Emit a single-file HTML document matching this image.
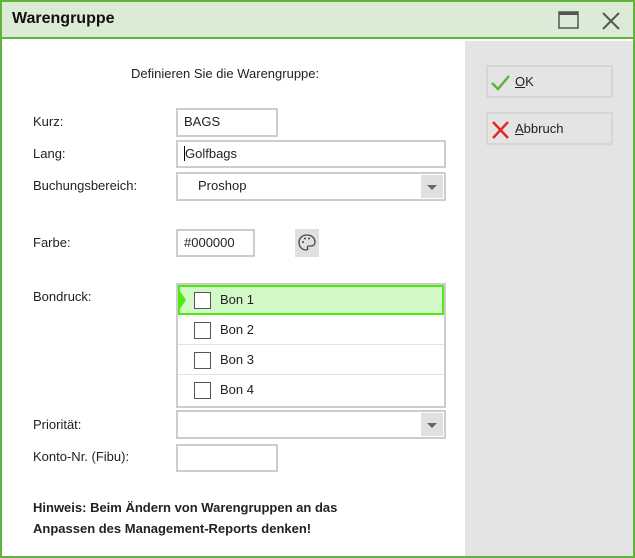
<!DOCTYPE html>
<html><head><style>
*{box-sizing:border-box;margin:0;padding:0}
body{width:635px;height:558px;overflow:hidden;background:#fff;font-family:"Liberation Sans","DejaVu Sans",sans-serif;font-size:13px;color:#222;position:relative}
.frame{position:absolute;left:0;top:0;width:635px;height:558px;border:2px solid #5fb43e}
.title{position:absolute;left:2px;top:2px;width:631px;height:37px;background:#dcebd5;border-bottom:2px solid #5fb43e}
.title span{position:absolute;left:10px;top:8px;font-weight:bold;font-size:16px;color:#111}
.right{position:absolute;left:465px;top:41px;width:168px;height:515px;background:#e4e4e4}
.a{position:absolute}
.lbl{position:absolute;left:33px;font-size:13px;color:#222}
.in{position:absolute;background:#fff;border:2px solid #cdcdcd;font-size:13px;padding:4px 0 0 6px}
.dd{position:absolute;right:1px;top:1px;width:22px;bottom:1px;background:#e0e0e0}
.dd:after{content:"";position:absolute;left:6px;top:10px;border:5px solid transparent;border-top:5px solid #666}
.btn{position:absolute;left:486px;width:127px;height:33px;border:2px solid #d6d6d6;background:#e4e4e4;font-size:13px}
.row{position:absolute;left:2px;width:266px;height:30px;border-bottom:1px solid #e2e2e2}
.cb{position:absolute;left:16px;top:7px;width:17px;height:17px;border:1px solid #555;background:#fff}
.row span{position:absolute;left:42px;top:7px}
</style></head><body>
<div class="frame"></div>
<div class="title"><span>Warengruppe</span>
<svg class="a" style="left:556px;top:9px" width="22" height="20"><rect x="1" y="1" width="19" height="16" fill="none" stroke="#555" stroke-width="1.5"/><rect x="1" y="1" width="19" height="3" fill="#555"/></svg>
<svg class="a" style="left:598px;top:8px" width="22" height="22"><path d="M3 3L19 19M19 3L3 19" stroke="#555" stroke-width="2"/></svg>
</div>
<div class="right"></div>
<div class="a" style="left:131px;top:66px">Definieren Sie die Warengruppe:</div>
<div class="lbl" style="top:114px">Kurz:</div>
<div class="lbl" style="top:146px">Lang:</div>
<div class="lbl" style="top:178px">Buchungsbereich:</div>
<div class="lbl" style="top:235px">Farbe:</div>
<div class="lbl" style="top:289px">Bondruck:</div>
<div class="lbl" style="top:417px">Priorität:</div>
<div class="lbl" style="top:449px">Konto-Nr. (Fibu):</div>
<div class="in" style="left:176px;top:108px;width:102px;height:29px">BAGS</div>
<div class="in" style="left:176px;top:140px;width:270px;height:28px"><span style="border-left:1px solid #000">Golfbags</span></div>
<div class="in" style="left:176px;top:172px;width:270px;height:29px;padding-left:20px">Proshop<div class="dd"></div></div>
<div class="in" style="left:176px;top:229px;width:79px;height:28px">#000000</div>
<div class="a" style="left:295px;top:229px;width:24px;height:28px;background:#e0e0e0">
<svg width="24" height="28"><path d="M12 6C7 6 4 9.5 4 13.5S7 21 11 21c1.5 0 2-1 1.5-2s0-2 1.5-2h2c2.5 0 4-1.5 4-4C20 9 16.5 6 12 6z" fill="none" stroke="#444" stroke-width="1.3"/><circle cx="8" cy="13" r="1" fill="#444"/><circle cx="10" cy="9.5" r="1" fill="#444"/><circle cx="14" cy="9.5" r="1" fill="#444"/></svg></div>
<div class="a" style="left:176px;top:283px;width:270px;height:125px;border:2px solid #cdcdcd;background:#fff">
<div class="row" style="top:0;left:0;width:266px;background:#d3fac6;border:2px solid #4fea10"><div style="position:absolute;left:-2px;top:1px;width:0;height:0;border-top:12px solid transparent;border-bottom:12px solid transparent;border-left:8px solid #4fea10"></div><div class="cb" style="top:5px;left:14px"></div><span style="top:5px;left:40px">Bon 1</span></div>
<div class="row" style="top:30px;left:0"><div class="cb"></div><span>Bon 2</span></div>
<div class="row" style="top:60px;left:0"><div class="cb"></div><span>Bon 3</span></div>
<div class="row" style="top:90px;left:0;border:none"><div class="cb"></div><span>Bon 4</span></div>
</div>
<div class="in" style="left:176px;top:410px;width:270px;height:29px"><div class="dd"></div></div>
<div class="in" style="left:176px;top:444px;width:102px;height:28px"></div>
<div class="a" style="left:33px;top:497px;font-weight:bold;line-height:21px">Hinweis: Beim Ändern von Warengruppen an das<br>Anpassen des Management-Reports denken!</div>
<div class="btn" style="top:65px"><svg class="a" style="left:2px;top:6px" width="22" height="20"><path d="M2 10L8 16L19 3" fill="none" stroke="#5cb43a" stroke-width="2.5"/></svg><span class="a" style="left:27px;top:7px"><u>O</u>K</span></div>
<div class="btn" style="top:112px"><svg class="a" style="left:2px;top:6px" width="22" height="20"><path d="M3 2L18 18M18 2L3 18" stroke="#e02a2a" stroke-width="2.5"/></svg><span class="a" style="left:27px;top:7px"><u>A</u>bbruch</span></div>
</body></html>
